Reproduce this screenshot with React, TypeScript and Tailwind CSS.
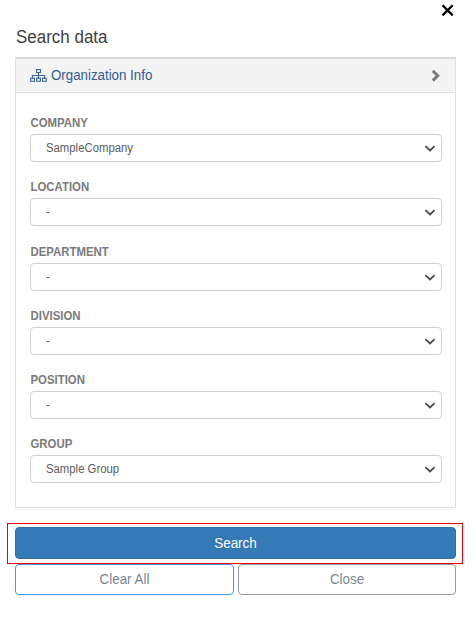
const fields = [
  { label: 'COMPANY', value: 'SampleCompany', space: 'h-[64px]' },
  { label: 'LOCATION', value: '-', space: 'h-[65px]' },
  { label: 'DEPARTMENT', value: '-', space: 'h-[64px]' },
  { label: 'DIVISION', value: '-', space: 'h-[64px]' },
  { label: 'POSITION', value: '-', space: 'h-[64px]' },
  { label: 'GROUP', value: 'Sample Group', space: 'h-[28px]' },
];

function SitemapIcon() {
  return (
    <svg width="18" height="14" viewBox="0 0 18 14" fill="none" stroke="#3a6496" strokeWidth="1.1">
      <rect x="6.5" y="0.5" width="4" height="3" />
      <path d="M8.5 3.5V9.7M2.5 9.7V6.5H14.5V9.7" />
      <rect x="0.7" y="9.2" width="3.8" height="3.1" />
      <rect x="6.6" y="9.2" width="3.8" height="3.1" />
      <rect x="12.5" y="9.2" width="3.8" height="3.1" />
    </svg>
  );
}

export default function App() {
  return (
    <div className="h-[617px] w-[476px] overflow-hidden bg-white pt-[4px] pl-[15px] font-['Liberation_Sans',Arial,sans-serif]">
      <div className="flex w-[441px] justify-end pr-[2px]">
        <button aria-label="Dismiss" className="block">
          <svg width="13" height="13" viewBox="0 0 13 13" fill="none" stroke="#000" strokeWidth="2.3">
            <path d="M1.5 1.2L11.7 11.4M11.7 1.2L1.5 11.4" />
          </svg>
        </button>
      </div>
      <h1 className="mt-[10px] h-[30px] origin-left scale-x-[0.97] pl-px text-[17.5px] leading-[21px] text-[#414141]">Search data</h1>
      <section className="h-[451px] w-[441px] border border-t-2 border-[#e0e0e0] border-t-[#dadada]">
        <header className="flex h-[34px] items-center border-b border-[#dedede] bg-[#f4f4f4] pr-[14px] pl-[14px]">
          <SitemapIcon />
          <span className="mb-[2px] ml-[3px] origin-left scale-x-[0.95] text-[14px] leading-[16px] text-[#2f5b92]">Organization Info</span>
          <svg className="ml-auto" width="10" height="12" viewBox="0 0 10 12" fill="none" stroke="#7b7b7b" strokeWidth="3">
            <path d="M1.8 0.8L6.7 5.7L1.8 10.6" />
          </svg>
        </header>
        <div className="pt-[23px] pl-[14px]">
          {fields.map((f) => (
            <div key={f.label} className={f.space}>
              <label className="block h-[18px] origin-left scale-x-[0.95] pl-[0.5px] text-[12px] leading-[14px] font-bold text-[#7b7b7b]">{f.label}</label>
              <div className="flex h-[28px] w-[412px] items-center justify-between rounded-[4px] border border-[#d0d0d0] pr-[5px] pl-[15px]">
                <span className="origin-left scale-x-[0.945] text-[12px] leading-[14px] text-[#5c5c5c]">{f.value}</span>
                <svg width="12" height="8" viewBox="0 0 12 8" fill="none" stroke="#4b4b4b" strokeWidth="1.8">
                  <path d="M1.4 2.1L6 6.4L10.6 2.1" />
                </svg>
              </div>
            </div>
          ))}
        </div>
      </section>
      <div className="mt-[15px] -ml-[8px] h-[41px] w-[456px] border border-[#f20000] px-[7px] pt-[3px]">
        <button className="block h-[32px] w-[441px] rounded-[4px] border border-[#2e6da4] bg-[#337ab7] text-[14px] leading-[30px] text-white">
          <span className="block scale-x-[0.955]">Search</span>
        </button>
      </div>
      <div className="flex w-[441px] gap-[4px] text-[14px] leading-[29px] text-[#7b848c]">
        <button className="h-[31px] w-[219px] rounded-[4px] border border-[#3f98fb]">
          <span className="block scale-x-[0.955]">Clear All</span>
        </button>
        <button className="h-[31px] w-[218px] rounded-[4px] border border-[#929ba3]">
          <span className="block scale-x-[0.955]">Close</span>
        </button>
      </div>
    </div>
  );
}
